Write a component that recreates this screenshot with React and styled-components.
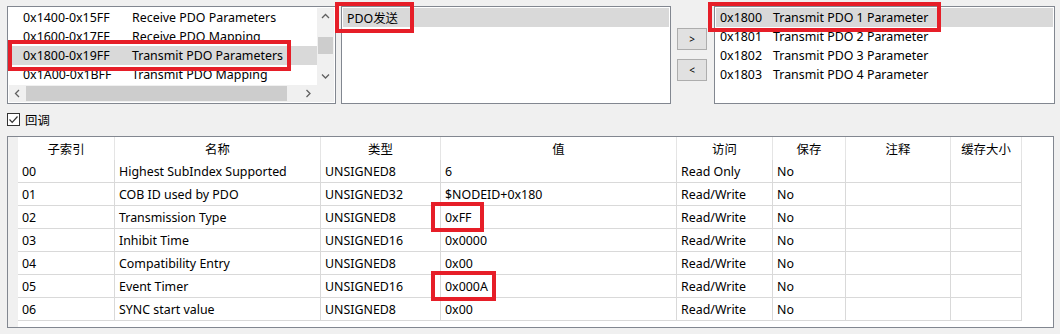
import styled, { createGlobalStyle } from "styled-components";

const GlobalStyle = createGlobalStyle`
  body {
    margin: 0;
    background: #f0f0f0;
    font-family: "Noto Sans", "Noto Sans CJK SC", sans-serif;
    font-size: 12.4px;
    color: #000;
  }
`;

const leftRows = [
  ["0x1400-0x15FF", "Receive PDO Parameters"],
  ["0x1600-0x17FF", "Receive PDO Mapping"],
  ["0x1800-0x19FF", "Transmit PDO Parameters"],
  ["0x1A00-0x1BFF", "Transmit PDO Mapping"],
];

const rightRows = [
  ["0x1800", "Transmit PDO 1 Parameter"],
  ["0x1801", "Transmit PDO 2 Parameter"],
  ["0x1802", "Transmit PDO 3 Parameter"],
  ["0x1803", "Transmit PDO 4 Parameter"],
];

const columns = [
  { title: "子索引", width: 97 },
  { title: "名称", width: 206 },
  { title: "类型", width: 120 },
  { title: "值", width: 236 },
  { title: "访问", width: 96 },
  { title: "保存", width: 73 },
  { title: "注释", width: 105 },
  { title: "缓存大小", width: 71 },
];

// mark = width of the red annotation box around the value cell
const rows = [
  { cells: ["00", "Highest SubIndex Supported", "UNSIGNED8", "6", "Read Only", "No"] },
  { cells: ["01", "COB ID used by PDO", "UNSIGNED32", "$NODEID+0x180", "Read/Write", "No"] },
  { cells: ["02", "Transmission Type", "UNSIGNED8", "0xFF", "Read/Write", "No"], mark: 53 },
  { cells: ["03", "Inhibit Time", "UNSIGNED16", "0x0000", "Read/Write", "No"] },
  { cells: ["04", "Compatibility Entry", "UNSIGNED8", "0x00", "Read/Write", "No"] },
  { cells: ["05", "Event Timer", "UNSIGNED16", "0x000A", "Read/Write", "No"], mark: 65 },
  { cells: ["06", "SYNC start value", "UNSIGNED8", "0x00", "Read/Write", "No"] },
];

const Chevron = ({ dir }) => {
  const d = {
    up: "M1 5 L4.5 1.5 L8 5",
    down: "M1 1.5 L4.5 5 L8 1.5",
    left: "M5 1 L1.5 4.5 L5 8",
    right: "M1.5 1 L5 4.5 L1.5 8",
  }[dir];
  const vert = dir === "up" || dir === "down";
  return (
    <svg width={vert ? 9 : 7} height={vert ? 7 : 9} viewBox={vert ? "0 0 9 7" : "0 0 7 9"}>
      <path d={d} fill="none" stroke="#606060" strokeWidth="1.3" />
    </svg>
  );
};

export default function App() {
  return (
    <>
      <GlobalStyle />
      <Page>
        <TopRow>
          <ListBox $width={329} $gap={5}>
            <ScrollArea>
              <ListBody>
                {leftRows.map(([a, b], i) => (
                  <ListRow key={a} $selected={i === 2}>
                    <RangeCell>{a}</RangeCell>
                    <span>{b}</span>
                    {i === 2 && <Mark $l={-1} $t={-6} $w={283} $h={31} />}
                  </ListRow>
                ))}
              </ListBody>
              <VScroll>
                <ArrowBox><Chevron dir="up" /></ArrowBox>
                <VTrack><VThumb /></VTrack>
                <ArrowBox><Chevron dir="down" /></ArrowBox>
              </VScroll>
            </ScrollArea>
            <HScrollRow>
              <HScroll>
                <HArrowBox><Chevron dir="left" /></HArrowBox>
                <HTrack><HThumb /></HTrack>
                <HArrowBox><Chevron dir="right" /></HArrowBox>
              </HScroll>
              <Corner />
            </HScrollRow>
          </ListBox>

          <ListBox $width={330}>
            <ListBody>
              <ListRow $selected>
                <span>PDO发送</span>
                <Mark $l={-8} $t={-6} $w={79} $h={31} />
              </ListRow>
            </ListBody>
          </ListBox>

          <ButtonCol>
            <MoveButton>&gt;</MoveButton>
            <MoveButton>&lt;</MoveButton>
          </ButtonCol>

          <ListBox $width={341}>
            <ListBody>
              {rightRows.map(([a, b], i) => (
                <ListRow key={a} $selected={i === 0}>
                  <IndexCell>{a}</IndexCell>
                  <span>{b}</span>
                  {i === 0 && <Mark $l={-8} $t={-6} $w={233} $h={30} />}
                </ListRow>
              ))}
            </ListBody>
          </ListBox>
        </TopRow>

        <CheckRow>
          <CheckBox>
            <svg width="11" height="11" viewBox="0 0 11 11">
              <path d="M1.5 5.5 L4.2 8.3 L9.5 2.5" fill="none" stroke="#333" strokeWidth="1.2" />
            </svg>
          </CheckBox>
          <span>回调</span>
        </CheckRow>

        <TableBox>
          <Gutter />
          <Grid>
            <HeaderRow>
              {columns.map((c) => (
                <HeadCell key={c.title} $w={c.width}>{c.title}</HeadCell>
              ))}
            </HeaderRow>
            {rows.map((r) => (
              <DataRow key={r.cells[0]}>
                {columns.map((c, i) => (
                  <Cell key={c.title} $w={c.width}>
                    {r.cells[i] || ""}
                    {i === 3 && r.mark && <Mark $l={-10} $t={-4} $w={r.mark} $h={30} />}
                  </Cell>
                ))}
              </DataRow>
            ))}
          </Grid>
        </TableBox>
      </Page>
    </>
  );
}

const Page = styled.div`
  width: 1060px;
  height: 334px;
  padding: 6px 0 0 7px;
  box-sizing: border-box;
`;

const TopRow = styled.div`
  display: flex;
  align-items: flex-start;
`;

const ListBox = styled.div`
  position: relative;
  width: ${(p) => p.$width}px;
  height: 98px;
  box-sizing: border-box;
  border: 1px solid #828790;
  background: #fff;
  display: flex;
  flex-direction: column;
  padding: 1px;
  margin-right: ${(p) => p.$gap || 0}px;
`;

const ScrollArea = styled.div`
  display: flex;
  flex: 1;
  min-height: 0;
`;

const ListBody = styled.div`
  flex: 1;
  display: flex;
  flex-direction: column;
`;

const ListRow = styled.div`
  position: relative;
  height: 19px;
  display: flex;
  align-items: center;
  padding-left: 4px;
  white-space: nowrap;
  background: ${(p) => (p.$selected ? "#d9d9d9" : "transparent")};
`;

const RangeCell = styled.span`
  width: 109px;
  padding-left: 10px;
`;

const IndexCell = styled.span`
  width: 53px;
`;

const Mark = styled.div`
  position: absolute;
  left: ${(p) => p.$l}px;
  top: ${(p) => p.$t}px;
  width: ${(p) => p.$w}px;
  height: ${(p) => p.$h}px;
  box-sizing: border-box;
  border: 4px solid #e61e28;
  pointer-events: none;
  z-index: 2;
`;

const VScroll = styled.div`
  width: 17px;
  display: flex;
  flex-direction: column;
  background: #f0f0f0;
`;

const ArrowBox = styled.div`
  height: 17px;
  display: flex;
  align-items: center;
  justify-content: center;
`;

const VTrack = styled.div`
  flex: 1;
  padding: 12px 1px 0;
`;

const VThumb = styled.div`
  height: 17px;
  background: #cdcdcd;
`;

const HScrollRow = styled.div`
  display: flex;
  height: 17px;
`;

const HScroll = styled.div`
  flex: 1;
  display: flex;
  background: #f0f0f0;
`;

const HArrowBox = styled.div`
  width: 17px;
  display: flex;
  align-items: center;
  justify-content: center;
`;

const HTrack = styled.div`
  flex: 1;
  padding: 1px 13px 1px 0;
  display: flex;
`;

const HThumb = styled.div`
  flex: 1;
  background: #cdcdcd;
`;

const Corner = styled.div`
  width: 17px;
  background: #f0f0f0;
`;

const ButtonCol = styled.div`
  display: flex;
  flex-direction: column;
  gap: 9px;
  padding-top: 22px;
  margin: 0 7px 0 6px;
`;

const MoveButton = styled.button`
  width: 30px;
  height: 22px;
  padding: 0;
  border: 1px solid #adadad;
  background: #e1e1e1;
  font-family: "Noto Sans", sans-serif;
  font-size: 10px;
  color: #000;
`;

const CheckRow = styled.div`
  display: flex;
  align-items: center;
  gap: 5px;
  height: 13px;
  margin-top: 9px;
`;

const CheckBox = styled.div`
  width: 13px;
  height: 13px;
  box-sizing: border-box;
  border: 1px solid #333;
  background: #fff;
  display: flex;
  align-items: center;
  justify-content: center;
`;

const TableBox = styled.div`
  margin-top: 10px;
  width: 1047px;
  height: 192px;
  box-sizing: border-box;
  border: 1px solid #828790;
  background: #fff;
  display: flex;
`;

const Gutter = styled.div`
  width: 10px;
  background: #f0f0f0;
`;

const Grid = styled.div`
  display: flex;
  flex-direction: column;
`;

const HeaderRow = styled.div`
  display: flex;
  height: 23px;
`;

const HeadCell = styled.div`
  width: ${(p) => p.$w}px;
  box-sizing: border-box;
  border-right: 1px solid #e5e5e5;
  display: flex;
  align-items: center;
  justify-content: center;
  font-family: "Noto Sans CJK SC", sans-serif;
`;

const DataRow = styled.div`
  display: flex;
  height: 23px;
`;

const Cell = styled.div`
  position: relative;
  width: ${(p) => p.$w}px;
  box-sizing: border-box;
  border-right: 1px solid #d9d9d9;
  border-bottom: 1px solid #d9d9d9;
  display: flex;
  align-items: center;
  padding-left: 4px;
  white-space: nowrap;
`;
